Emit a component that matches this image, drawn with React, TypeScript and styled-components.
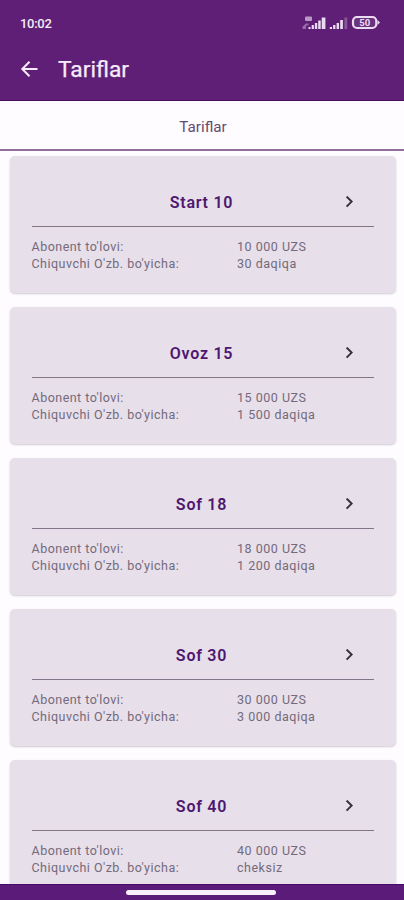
import React from "react";
import styled, { createGlobalStyle } from "styled-components";

const GlobalStyle = createGlobalStyle`
  * { box-sizing: border-box; }
  body { margin: 0; background: #fefcff; font-family: Roboto, "Liberation Sans", sans-serif; }
`;

const Screen = styled.div`
  height: 900px;
  overflow: hidden;
  display: flex;
  flex-direction: column;
  background: #fefcff;
`;

const Header = styled.header`
  flex: none;
  height: 101px;
  background: #5f1f76;
  border-bottom: 1px solid #4a0d60;
  color: #f6ecfa;
`;

const StatusBar = styled.div`
  height: 46px;
  padding: 0 23px 0 20px;
  display: flex;
  align-items: center;
  justify-content: space-between;
`;

const Clock = styled.span`
  font-size: 13px;
  font-weight: 500;
  line-height: 16px;
  letter-spacing: -0.3px;
  padding-top: 1px;
`;

const TitleBar = styled.div`
  height: 46px;
  padding-left: 20px;
  display: flex;
  align-items: center;
`;

const BackButton = styled.button`
  border: 0;
  padding: 0;
  background: none;
  width: 18px;
  height: 18px;
  color: inherit;
  display: flex;
`;

const Title = styled.h1`
  margin: 2px 0 0 20px;
  font-size: 22.8px;
  line-height: 28px;
  font-weight: 400;
  -webkit-text-stroke: 0.25px currentColor;
`;

const Tab = styled.div`
  flex: none;
  height: 50px;
  padding: 4px 0 0 2px;
  border-bottom: 2px solid #916f9d;
  display: flex;
  align-items: center;
  justify-content: center;
  font-size: 15.2px;
  color: #654b71;
`;

const List = styled.main`
  flex: 1;
  min-height: 0;
  overflow: hidden;
  padding: 4.5px 8.5px 0 10px;
  display: flex;
  flex-direction: column;
  gap: 14.1px;
`;

const Card = styled.article`
  flex: none;
  height: 137px;
  border-radius: 5px;
  padding: 23px 22px 0 21.5px;
  background: #e7dfea;
  box-shadow: 0 1px 2px rgba(65, 45, 75, 0.24);
`;

const CardHead = styled.div`
  height: 48px;
  border-bottom: 1px solid #817789;
  display: grid;
  grid-template-columns: 48px 1fr 48px;
  align-items: center;
`;

const CardName = styled.h2`
  grid-column: 2;
  margin: 0;
  text-align: center;
  font-size: 16px;
  line-height: 20px;
  font-weight: 600;
  letter-spacing: 0.75px;
  color: #4d1770;
  padding: 2px 2px 0 0;
`;

const ChevronBox = styled.span`
  display: flex;
  justify-content: center;
  color: #38303f;
`;

const Details = styled.dl`
  margin: 0;
  padding-top: 11.6px;
  display: grid;
  grid-template-columns: 205.5px 1fr;
  grid-auto-rows: 16.5px;
  font-size: 12.5px;
  line-height: 17px;
  letter-spacing: 0.5px;
  color: #746a7b;
  white-space: nowrap;
`;

const Label = styled.dt`
  letter-spacing: 0.48px;
`;

const Value = styled.dd`
  margin: 0;
  letter-spacing: 0.52px;
`;

const BottomBar = styled.footer`
  flex: none;
  height: 16px;
  background: #5b1b78;
  border-top: 1px solid #4b0967;
  display: flex;
  justify-content: center;
  padding-top: 5px;
`;

const HomeIndicator = styled.div`
  width: 150px;
  height: 5px;
  margin-right: 2px;
  border-radius: 3px;
  background: #faf0fc;
`;

const plans = [
  { name: "Start 10", fee: "10 000 UZS", calls: "30 daqiqa" },
  { name: "Ovoz 15", fee: "15 000 UZS", calls: "1 500 daqiqa" },
  { name: "Sof 18", fee: "18 000 UZS", calls: "1 200 daqiqa" },
  { name: "Sof 30", fee: "30 000 UZS", calls: "3 000 daqiqa" },
  { name: "Sof 40", fee: "40 000 UZS", calls: "cheksiz" },
];

function StatusIcons() {
  return (
    <svg width="79" height="16" viewBox="0 0 79 16" fill="#eadcf0">
      <rect x="3" y="1.5" width="7" height="4.5" rx="1" opacity="0.65" />
      <path d="M0.5 14V11.5L4 8.5h2.5V10L4 11v3z" opacity="0.4" />
      <rect x="6.5" y="12" width="2" height="2" />
      <rect x="9.7" y="10" width="2.2" height="4" />
      <rect x="12.9" y="8" width="2.3" height="6" />
      <rect x="16.2" y="5.5" width="2.5" height="8.5" />
      <rect x="19.7" y="2.5" width="3.7" height="11.5" />
      <rect x="27.8" y="12" width="2.2" height="2" />
      <rect x="31.1" y="10" width="2.3" height="4" />
      <rect x="34.6" y="8" width="2.4" height="6" />
      <rect x="38.2" y="5" width="2.7" height="9" />
      <rect x="42.4" y="2.5" width="2.8" height="11.5" opacity="0.3" />
      <rect x="51" y="2" width="23.3" height="11" rx="4" fill="#6b337f" stroke="#eadcf0" strokeWidth="2.2" />
      <path d="M75.5 5L78 7.5L75.5 10z" />
      <text x="62.7" y="11" textAnchor="middle" fontFamily="Roboto, sans-serif" fontSize="9.5" fontWeight="700">50</text>
    </svg>
  );
}

function BackIcon() {
  return (
    <svg width="18" height="18" viewBox="0 0 18 18" fill="none" stroke="currentColor" strokeWidth="2">
      <path d="M17.5 9H2.5M9.5 1.8L2.3 9L9.5 16.2" />
    </svg>
  );
}

function ChevronIcon() {
  return (
    <svg width="10" height="12" viewBox="0 0 10 12" fill="none" stroke="currentColor" strokeWidth="2">
      <path d="M1.6 0.6L6.6 5.6L1.6 10.6" />
    </svg>
  );
}

export default function App() {
  return (
    <>
      <GlobalStyle />
      <Screen>
        <Header>
          <StatusBar>
            <Clock>10:02</Clock>
            <StatusIcons />
          </StatusBar>
          <TitleBar>
            <BackButton aria-label="Orqaga"><BackIcon /></BackButton>
            <Title>Tariflar</Title>
          </TitleBar>
        </Header>
        <Tab>Tariflar</Tab>
        <List>
          {plans.map((plan) => (
            <Card key={plan.name}>
              <CardHead>
                <CardName>{plan.name}</CardName>
                <ChevronBox><ChevronIcon /></ChevronBox>
              </CardHead>
              <Details>
                <Label>Abonent to'lovi:</Label>
                <Value>{plan.fee}</Value>
                <Label>Chiquvchi O'zb. bo'yicha:</Label>
                <Value>{plan.calls}</Value>
              </Details>
            </Card>
          ))}
        </List>
        <BottomBar><HomeIndicator /></BottomBar>
      </Screen>
    </>
  );
}
